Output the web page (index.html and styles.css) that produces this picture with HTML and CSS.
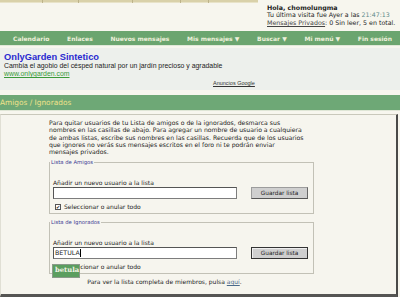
FILE: index.html
```html
<!DOCTYPE html>
<html>
<head>
<meta charset="utf-8">
<link rel="stylesheet" href="styles.css">
</head>
<body>
<div class="top">
  <div class="tabs">
    <span class="tab t1"></span><span class="tab t2"></span><span class="tab t3"></span><span class="tab t4"></span><span class="tab t5"></span><span class="tab t6"></span>
  </div>
  <div class="greet">
    <div class="hello">Hola, chomolungma</div>
    <div>Tu última visita fue Ayer a las <span class="time">21:47:13</span></div>
    <div><a class="pm">Mensajes Privados</a>: 0 Sin leer, 5 en total.</div>
  </div>
</div>
<div class="nav">
  <span>Calendario</span>
  <span>Enlaces</span>
  <span>Nuevos mensajes</span>
  <span>Mis mensajes ▼</span>
  <span>Buscar ▼</span>
  <span>Mi menú ▼</span>
  <span>Fin sesión</span>
</div>
<div class="ad">
  <div class="ad-title">OnlyGarden Sintetico</div>
  <div class="ad-text">Cambia el agobio del césped natural por un jardín precioso y agradable</div>
  <div class="ad-url">www.onlygarden.com</div>
  <div class="ad-google">Anuncios Google</div>
</div>
<div class="heading">Amigos / Ignorados</div>
<div class="box">
  <div class="inner">
    <p class="intro">Para quitar usuarios de tu Lista de amigos o de la ignorados, desmarca sus nombres en las casillas de abajo. Para agregar un nombre de usuario a cualquiera de ambas listas, escribe sus nombres en las casillas. Recuerda que de los usuarios que ignores no verás sus mensajes escritos en el foro ni te podrán enviar mensajes privados.</p>
    <fieldset class="fs fs1">
      <legend>Lista de Amigos</legend>
      <div class="lbl">Añadir un nuevo usuario a la lista</div>
      <div class="row">
        <div class="input"></div>
        <div class="btn">Guardar lista</div>
      </div>
      <div class="check"><span class="cb">✔</span>Seleccionar o anular todo</div>
    </fieldset>
    <fieldset class="fs fs2">
      <legend>Lista de Ignorados</legend>
      <div class="lbl">Añadir un nuevo usuario a la lista</div>
      <div class="row">
        <div class="input">BETULA<span class="caret"></span></div>
        <div class="btn btn-active">Guardar lista</div>
      </div>
      <div class="check"><span class="cb">✔</span>Seleccionar o anular todo</div>
      <div class="suggest">betula</div>
    </fieldset>
    <p class="more">Para ver la lista completa de miembros, pulsa <a class="here">aquí</a>.</p>
  </div>
</div>
</body>
</html>
```
FILE: styles.css
```css
* { box-sizing: border-box; }
body {
  margin: 0;
  background: #f7f6ee;
  font-family: "DejaVu Sans", Verdana, sans-serif;
  font-size: 6px;
  color: #222;
  overflow: hidden;
}
.top {
  display: flex;
  height: 31px;
}
.tabs {
  width: 258px;
  height: 3px;
  display: flex;
  background: #d9d1a9;
  border-bottom: 1px solid #e8e3c8;
}
.tab { height: 3px; border-right: 1px solid #bdb38a; }
.t1 { width: 43px; }
.t2 { width: 36px; }
.t3 { width: 54px; }
.t4 { width: 48px; }
.t5 { width: 28px; }
.t6 { width: 49px; border-right: 0; }
.greet {
  padding: 4px 0 0 9px;
  font-size: 6.3px;
  line-height: 7.4px;
  color: #222;
}
.hello { font-weight: bold; }
.time { color: #5d8a8a; }
.pm { color: #444; text-decoration: underline; }
.nav {
  background: #6ba56f;
  height: 15px;
  display: flex;
  justify-content: space-between;
  align-items: center;
  padding: 0 8px 0 13px;
  color: #eef0dc;
  font-size: 6px;
  font-weight: bold;
  border-bottom: 1px solid #dfe8d8;
}
.ad {
  background: #edf0ec;
  margin-top: 2px;
  height: 42px;
  padding: 4px 4px 0;
  font-family: "Liberation Sans", Arial, sans-serif;
}
.ad-title {
  color: #2a2ad0;
  font-weight: bold;
  font-size: 9.3px;
  line-height: 10px;
}
.ad-text {
  font-size: 6.9px;
  line-height: 8px;
  color: #222;
}
.ad-url {
  font-size: 6.9px;
  line-height: 8px;
  color: #3a9a3a;
  text-decoration: underline;
}
.ad-google {
  font-size: 5.5px;
  color: #333;
  text-decoration: underline;
  margin: 2px 0 0 209px;
}
.heading {
  margin-top: 5px;
  background: #6ea876;
  height: 16px;
  line-height: 16px;
  color: #f0e28a;
  font-size: 7.4px;
  border-bottom: 1px solid #dfe6d6;
}
.box {
  margin-top: 3px;
  width: 398px;
  height: 183px;
  border-top: 1px solid #c9c8bb;
  border-left: 1px solid #e0dfd4;
  border-right: 2px solid #4a4a48;
  border-bottom: 3px solid #555553;
  background: #f6f5ee;
}
.inner {
  padding: 4px 0 0 48px;
  width: 316px;
}
.intro {
  margin: 0;
  width: 256px;
  font-size: 6.15px;
  line-height: 7.3px;
  color: #222;
}
.fs {
  margin: 4px 0 0 0;
  padding: 0 4px 4px 3px;
  border: 1px solid #c2c1b6;
  width: 265px;
}
.fs legend {
  font-size: 5.3px;
  color: #3a3a92;
  padding: 0 1px;
  margin-left: -3px;
  line-height: 6px;
}
.fs1 { height: 55px; }
.fs2 { height: 55px; margin-top: 5px; position: relative; }
.lbl {
  margin-top: 14px;
  font-size: 6px;
  line-height: 7px;
}
.row {
  display: flex;
  align-items: center;
  gap: 14px;
  margin-top: 1px;
}
.input {
  width: 184px;
  height: 12px;
  background: #fff;
  border: 1px solid #7d7d7d;
  border-top-color: #555;
  border-left-color: #555;
  font-size: 6.3px;
  line-height: 10px;
  padding-left: 1px;
  display: flex;
  align-items: center;
}
.caret {
  width: 1px;
  height: 8px;
  background: #000;
}
.btn {
  width: 57px;
  height: 12px;
  background: #cfcfcf;
  border: 1px solid #9c9c9c;
  border-right-color: #666;
  border-bottom-color: #555;
  font-size: 5.8px;
  text-align: center;
  line-height: 10px;
  color: #222;
}
.btn-active {
  border: 1px solid #333;
  box-shadow: inset 1px 1px 0 #eee;
}
.check {
  display: flex;
  align-items: center;
  margin-top: 4px;
  font-size: 6px;
  line-height: 7px;
}
.cb {
  width: 6px;
  height: 6px;
  border: 1px solid #555;
  background: #fff;
  font-size: 5px;
  line-height: 4px;
  text-align: center;
  margin: 0 3px 0 2px;
  color: #222;
}
.suggest {
  position: absolute;
  left: 2px;
  top: 39px;
  width: 28px;
  height: 14px;
  background: #5b9e5f;
  border: 1px solid #8a9a8a;
  color: #f4f4e8;
  font-family: "DejaVu Serif", serif;
  font-weight: bold;
  font-size: 6.8px;
  line-height: 11px;
  padding-left: 2px;
}
.more {
  margin: 4px 0 0 0;
  text-align: center;
  font-size: 6px;
  line-height: 7px;
  padding-right: 37px;
}
.here { color: #4a6a8a; text-decoration: underline; }
```
